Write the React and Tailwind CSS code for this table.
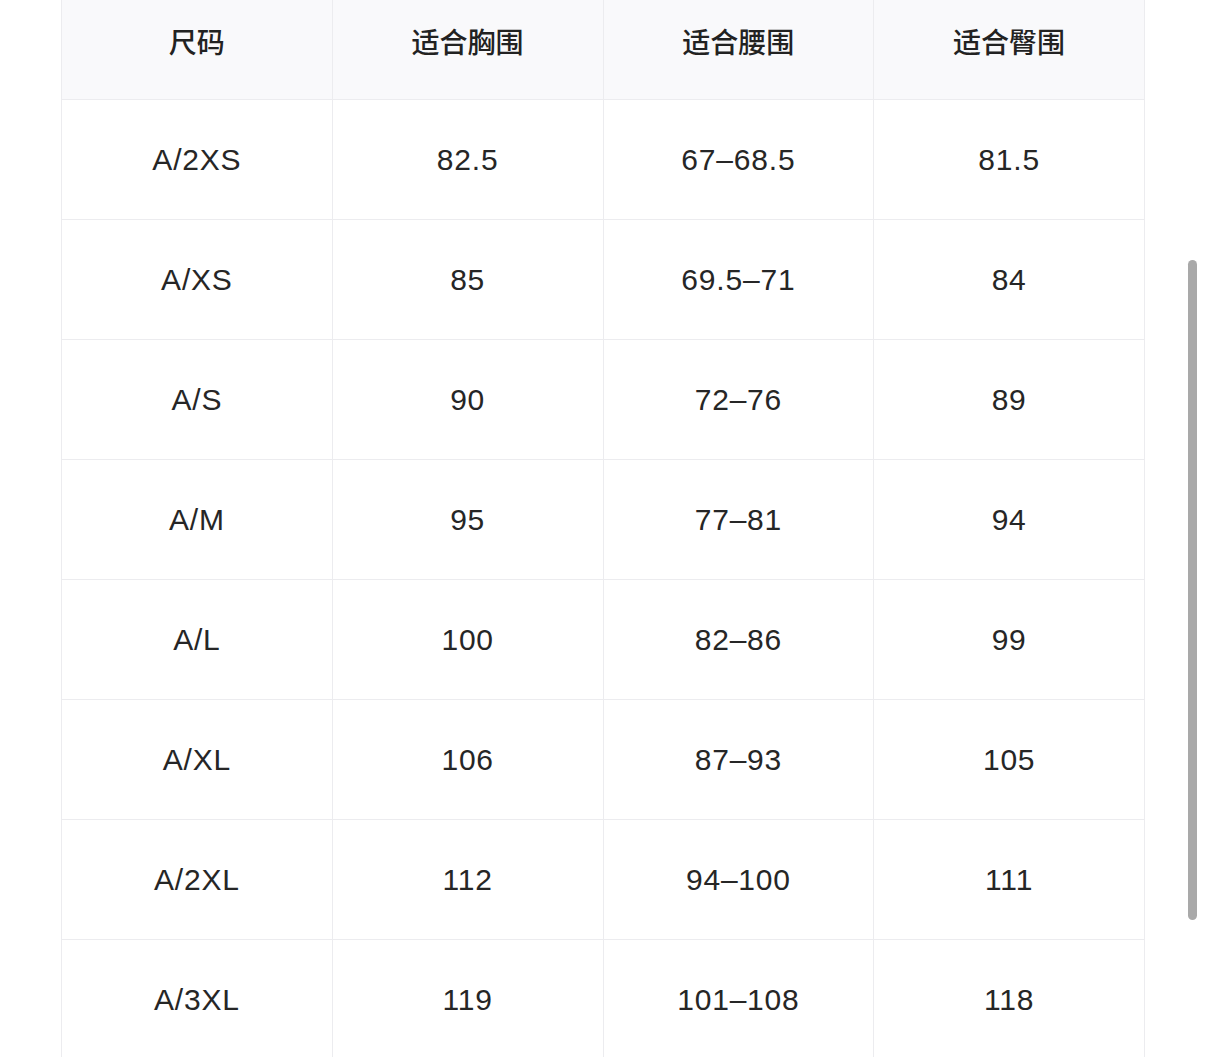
import React from 'react'

const headers = ['尺码', '适合胸围', '适合腰围', '适合臀围'];

const rows = [
  ['A/2XS', '82.5', '67–68.5', '81.5'],
  ['A/XS', '85', '69.5–71', '84'],
  ['A/S', '90', '72–76', '89'],
  ['A/M', '95', '77–81', '94'],
  ['A/L', '100', '82–86', '99'],
  ['A/XL', '106', '87–93', '105'],
  ['A/2XL', '112', '94–100', '111'],
  ['A/3XL', '119', '101–108', '118'],
];

export default function App() {
  return (
    <div className="relative h-[1057px] overflow-hidden bg-white text-[#222222]">
      <div className="mx-auto w-[1084px] border-l border-[#ececef]">
        <div className="grid grid-cols-4">
          {headers.map((h) => (
            <div
              key={h}
              className="flex h-[100px] items-center justify-center border-r border-b border-[#ececef] bg-[#f9f9fb] pb-[18px] text-[28px] font-medium"
              style={{ fontFamily: '"Noto Sans CJK SC", "Noto Sans", sans-serif' }}
            >
              {h}
            </div>
          ))}
        </div>
        {rows.map((row) => (
          <div key={row[0]} className="grid grid-cols-4">
            {row.map((cell, i) => (
              <div
                key={i}
                className="flex h-[120px] items-center justify-center border-r border-b border-[#ececef] text-[30px] tracking-[0.8px] text-[#262626] font-['Liberation_Sans',sans-serif]"
              >
                {cell}
              </div>
            ))}
          </div>
        ))}
      </div>

      {/* scroll thumb */}
      <div className="absolute left-[1188px] top-[260px] h-[660px] w-[9px] rounded-full bg-[#a9a9a9]" />
    </div>
  );
}
